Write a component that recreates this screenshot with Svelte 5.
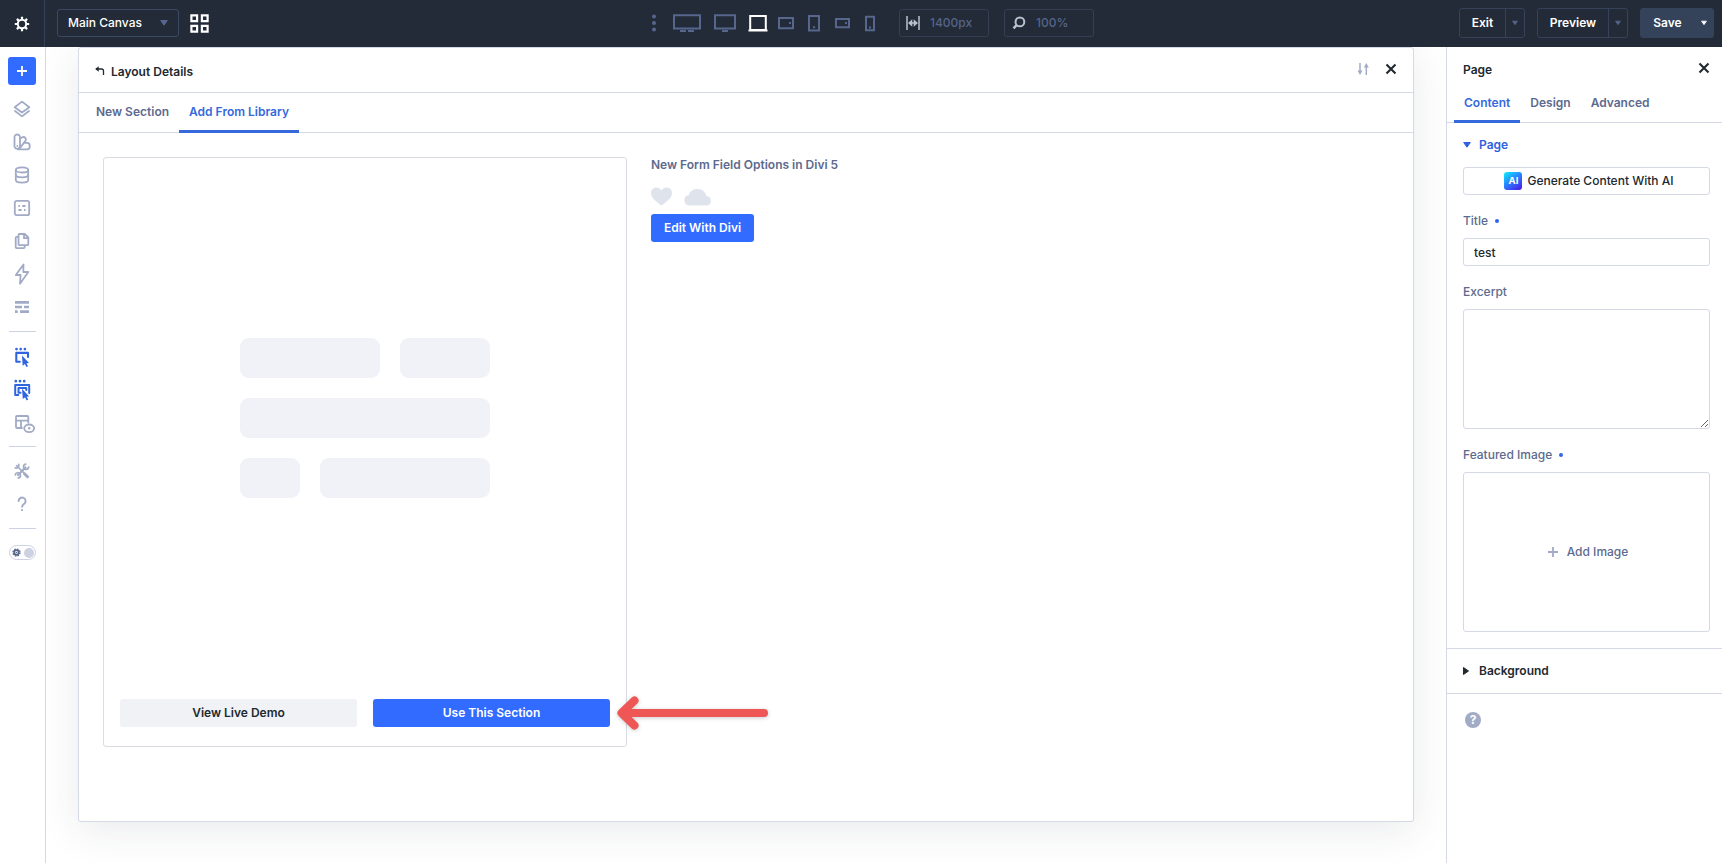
<script lang="ts">
  // Sidebar tools, grouped by the dividers between them
  const toolGroups = [
    ['layers', 'presets', 'database', 'variables', 'pages', 'bolt', 'wireframe'],
    ['select', 'multiselect', 'layoutview'],
    ['tools', 'support']
  ];

  const devices = ['wide', 'desktop', 'laptop', 'tabletwide', 'tablet', 'phonewide', 'phone'];
  let activeDevice = $state('laptop');

  const libraryTabs = ['New Section', 'Add From Library'];
  let activeLibraryTab = $state('Add From Library');

  const pageTabs = ['Content', 'Design', 'Advanced'];
  let activePageTab = $state('Content');

  let title = $state('test');
  let excerpt = $state('');
</script>

{#snippet caret()}
  <svg class="caret" width="8" height="6" viewBox="0 0 8 6"><path d="M.7.5h6.6L4 5.2z" fill="currentColor" stroke="currentColor" stroke-linejoin="round" /></svg>
{/snippet}

{#snippet close()}
  <svg width="12" height="12" viewBox="0 0 12 12"><path d="M1.500 1.500l9 9M10.500 1.500l-9 9" stroke="currentColor" stroke-width="2.100" /></svg>
{/snippet}

{#snippet toolIcon(name: string)}
  <svg width="24" height="24" viewBox="0 0 24 24" fill="none" stroke="currentColor" stroke-width="1.8" stroke-linejoin="round" stroke-linecap="round">
    {#if name === 'layers'}
      <path d="M12 4.600L19.300 10.200L12 15.500L4.700 10.200z" />
      <path d="M5 14L12 19.400L19 14" />
    {:else if name === 'presets'}
      <path d="M7.400 4.500a2.600 2.600 0 0 1 2.600 2.600V16.800a2.900 2.900 0 0 1-5.500 0V7.100a2.600 2.600 0 0 1 2.900-2.600z" />
      <path d="M10.300 8.400l2.100-1.100a2.400 2.400 0 0 1 3.200 3.300L9.500 18.600" />
      <path d="M15 12.800h2.200a2.700 2.700 0 0 1 2.500 2.700v1.300a2.500 2.500 0 0 1-2.500 2.500H7.800" />
      <path d="M7.300 16v.1" />
    {:else if name === 'database'}
      <ellipse cx="12" cy="6.900" rx="6.200" ry="2.600" />
      <path d="M5.800 7v10c0 1.500 2.800 2.600 6.200 2.600s6.200-1.100 6.200-2.600V7" />
      <path d="M5.800 12c0 1.500 2.800 2.300 6.200 2.300s6.200-.8 6.200-2.300" />
    {:else if name === 'variables'}
      <rect x="4.800" y="4.800" width="14.400" height="14.400" rx="2" />
      <path d="M8.400 10h1.500M12.300 10h3.200M8.400 14h3.200M14 14h1.500" stroke-linecap="butt" />
    {:else if name === 'pages'}
      <path d="M9.500 5h5.300l3.500 3.500v6.700a1 1 0 0 1-1 1H9.500a1 1 0 0 1-1-1V6a1 1 0 0 1 1-1zM14 5.200v4h4" />
      <path d="M8.300 7.800H6.700a1 1 0 0 0-1 1v9.300a1 1 0 0 0 1 1h7a1 1 0 0 0 1-1v-1.500" />
    {:else if name === 'bolt'}
      <path d="M13.500 2.500L5.800 13h4.800l-.6 8.700L18.300 10h-5z" />
    {:else if name === 'wireframe'}
      <path d="M5 7.400h14M5 12h7M14 12h5M5 16.600h2.700M10 16.600h9" stroke-width="2.700" stroke-linecap="butt" />
    {:else if name === 'select'}
      <path d="M6.500 5v.1M10.700 5v.1M14.900 5v.1" stroke-width="2.700" />
      <path d="M18 13V8.900H6.300V17.700H9.800" stroke-width="2.100" />
      <path d="M12 11.500l7 7.600-2.500.2 1.500 3-1.600.8-1.500-3.100-2.200 1.700z" fill="currentColor" stroke="none" />
    {:else if name === 'multiselect'}
      <path d="M5.800 4.100v.1M10 4.100v.1M14.200 4.100v.1" stroke-width="2.700" />
      <path d="M19.200 16V8H5.200V18H8.300M16.300 13v-2H8.500v4.700h2" stroke-width="2" />
      <path d="M12 11.800l7.200 7.600-2.500.2 1.500 3-1.600.8-1.500-3.100-2.300 1.700z" fill="currentColor" stroke="none" />
    {:else if name === 'layoutview'}
      <path d="M18.300 11.500V6a1 1 0 0 0-1-1H7a1 1 0 0 0-1 1v10a1 1 0 0 0 1 1h5M6 9.600h12M11 9.600v7" />
      <ellipse cx="19.200" cy="17.300" rx="5" ry="3.800" /><circle cx="19.200" cy="17.300" r="1.200" fill="currentColor" stroke="none" />
    {:else if name === 'tools'}
      <path d="M6.500 6.500L15 15" stroke-width="1.600" /><path d="M14.500 14.800L17.500 17.800" stroke-width="3" />
      <path d="M15.500 8.500L8 16" stroke-width="2.200" />
      <path d="M8.700 5.300a2.700 2.700 0 0 1-3.500 3.500M18.700 8.200a2.600 2.600 0 1 1-3-3M5.300 15.900a2.600 2.600 0 1 1 3 3" stroke-width="1.700" />
    {:else}
      <path d="M8.600 9.100a3.500 3.500 0 1 1 5.700 2.700c-1.500 1.100-2.200 1.600-2.200 3" stroke-width="1.900" /><path d="M12 18v.1" stroke-width="2.200" />
    {/if}
  </svg>
{/snippet}

{#snippet deviceIcon(name: string)}
  {#if name === 'wide'}
    <svg width="28" height="20" viewBox="0 0 28 20"><path d="M1 2.300h26v13.200H1zM7 18h6M15 18h6" /></svg>
  {:else if name === 'desktop'}
    <svg width="22" height="20" viewBox="0 0 22 20"><path d="M1 2.300h20v13.200H1zM8 18h6" /></svg>
  {:else if name === 'laptop'}
    <svg width="20" height="20" viewBox="0 0 20 20"><path d="M2.200 3h15.600v14H2.200zM.5 17.500h19" /></svg>
  {:else if name === 'tabletwide'}
    <svg width="16" height="20" viewBox="0 0 16 20"><path d="M1 5h14v10.200H1zM11 10h2" /></svg>
  {:else if name === 'tablet'}
    <svg width="12" height="20" viewBox="0 0 12 20"><path d="M1 3h10v14.500H1zM5 14.300h2" /></svg>
  {:else if name === 'phonewide'}
    <svg width="15" height="20" viewBox="0 0 15 20"><path d="M1 6h13v8.200H1zM10 10h2" /></svg>
  {:else}
    <svg width="10" height="20" viewBox="0 0 10 20"><path d="M1 3.800h8v13.500H1zM4 14.500h2" /></svg>
  {/if}
{/snippet}

<div class="builder">
  <header class="topbar">
    <button class="settings" aria-label="Settings">
      <svg width="16" height="16" viewBox="0 0 16 16" fill="none" stroke="currentColor">
        <circle cx="8" cy="8" r="4.200" stroke-width="2" />
        <path d="M8 .8v2.500M8 12.700v2.500M.8 8h2.500M12.700 8h2.500M2.900 2.900l1.800 1.800M11.300 11.300l1.800 1.800M13.100 2.900l-1.800 1.800M4.700 11.300l-1.800 1.800" stroke-width="2.200" />
      </svg>
    </button>
    <button class="canvas-select">
      <span>Main Canvas</span>
      {@render caret()}
    </button>
    <button class="grid-button" aria-label="Canvases">
      <svg width="19" height="19" viewBox="0 0 19 19" fill="none" stroke="currentColor" stroke-width="2.200"><path d="M1.400 1.400h5.700v5.700H1.400zM11.900 1.400h5.700v5.700h-5.700zM1.400 11.900h5.700v5.700H1.400zM11.900 11.900h5.700v5.700h-5.700z" /></svg>
    </button>

    <div class="devices">
      <svg class="dots" width="4" height="18" viewBox="0 0 4 18"><circle cx="2" cy="2.500" r="2" /><circle cx="2" cy="9" r="2" /><circle cx="2" cy="15.500" r="2" /></svg>
      {#each devices as device}
        <button class="device {device} {device === activeDevice ? 'active' : ''}" aria-label={device} onclick={() => activeDevice = device}>
          {@render deviceIcon(device)}
        </button>
      {/each}
    </div>

    <div class="measure">
      <svg width="14" height="14" viewBox="0 0 14 14" fill="none" stroke="currentColor" stroke-width="1.500"><path d="M1 0v14M13 0v14M3 7h8" stroke-width="1.500" /><path d="M6.300 3.200v7.600L2 7zM7.700 3.200v7.600L12 7z" fill="currentColor" stroke="none" /></svg>
      <span>1400px</span>
    </div>
    <div class="measure zoom">
      <svg width="14" height="14" viewBox="0 0 14 14" fill="none" stroke="currentColor" stroke-width="2"><circle cx="7.900" cy="5.900" r="4.400" /><path d="M4.600 9.200L1.500 12.300" stroke-width="2.600" /></svg>
      <span>100%</span>
    </div>

    <div class="actions">
      <div class="split exit"><button>Exit</button><button class="more" aria-label="Exit options">{@render caret()}</button></div>
      <div class="split preview"><button>Preview</button><button class="more" aria-label="Preview options">{@render caret()}</button></div>
      <div class="split save"><button>Save</button><button class="more" aria-label="Save options">{@render caret()}</button></div>
    </div>
  </header>

  <div class="workspace">
    <nav class="sidebar">
      <button class="add" aria-label="Add">
        <svg width="10" height="10" viewBox="0 0 10 10"><path d="M5 0v10M0 5h10" stroke="currentColor" stroke-width="1.800" /></svg>
      </button>
      {#each toolGroups as group}
        <div class="tool-group">
          {#each group as tool}
            <button class="tool {tool}" aria-label={tool}>{@render toolIcon(tool)}</button>
          {/each}
        </div>
        <hr />
      {/each}
      <button class="theme-toggle" aria-label="Theme">
        <svg width="9" height="9" viewBox="0 0 9 9" fill="none"><circle cx="4.500" cy="4.500" r="2.300" stroke="#58658a" stroke-width="1.800" /><circle cx="4.500" cy="4.500" r="3.500" stroke="#58658a" stroke-width="1.300" stroke-dasharray="1.600 1.150" /><circle cx="4.500" cy="4.500" r=".8" fill="#58658a" /></svg>
        <span class="knob"></span>
      </button>
    </nav>

    <main class="stage">
      <section class="modal">
        <div class="modal-header">
          <svg width="10" height="9" viewBox="0 0 10 9" fill="none" stroke="currentColor" stroke-width="1.300"><path d="M1 3h5.500a2 2 0 0 1 2 2v4" /><path d="M3.700.2L.2 3l3.500 2.700z" fill="currentColor" stroke="none" /></svg>
          <h2>Layout Details</h2>
          <svg class="sort" width="12" height="12" viewBox="0 0 12 12" fill="none" stroke="currentColor" stroke-width="1.500"><path d="M3 0v10M9.300 2v10" /><path d="M.5 7.500h5L3 12zM6.800 4.500h5L9.300 0z" fill="currentColor" stroke="none" /></svg>
          <button class="close" aria-label="Close">{@render close()}</button>
        </div>
        <div class="modal-tabs">
          {#each libraryTabs as tab}
            <button class={tab === activeLibraryTab ? 'active' : ''} onclick={() => activeLibraryTab = tab}>{tab}</button>
          {/each}
        </div>
        <div class="modal-body">
          <div class="preview-card">
            <div class="skeleton">
              <div class="row"><span class="bone w140"></span><span class="bone"></span></div>
              <div class="row"><span class="bone"></span></div>
              <div class="row"><span class="bone w60"></span><span class="bone"></span></div>
            </div>
            <div class="card-buttons">
              <button class="demo">View Live Demo</button>
              <button class="use">Use This Section</button>
            </div>
            <svg class="pointer" width="160" height="48" viewBox="0 0 160 48"><path d="M148 24H9M18.500 11.500L5.500 24l13 12.500" fill="none" stroke="#ef5656" stroke-width="8" stroke-linecap="round" stroke-linejoin="round" /></svg>
          </div>
          <div class="details">
            <h3>New Form Field Options in Divi 5</h3>
            <div class="badges">
              <svg width="21" height="19" viewBox="0 0 21 19"><path d="M10.500 18.600C7 15.800 0 11.500 0 6 0 2.800 2.300.5 5.300.5c2.200 0 4 1.200 5.200 3 1.200-1.800 3-3 5.200-3C18.700.5 21 2.800 21 6c0 5.500-7 9.800-10.500 12.600z" fill="currentColor" /></svg>
              <svg width="28" height="19" viewBox="0 0 28 19"><path d="M5.400 18.500a5.300 5.300 0 0 1-.7-10.500A9.400 9.400 0 0 1 22.500 8.900 4.900 4.900 0 0 1 23.200 18.500z" fill="currentColor" /></svg>
            </div>
            <button class="edit">Edit With Divi</button>
          </div>
        </div>
      </section>
    </main>

    <aside class="panel">
      <div class="panel-header">
        <h2>Page</h2>
        <button class="close" aria-label="Close">{@render close()}</button>
      </div>
      <div class="panel-tabs">
        {#each pageTabs as tab}
          <button class={tab === activePageTab ? 'active' : ''} onclick={() => activePageTab = tab}>{tab}</button>
        {/each}
      </div>
      <div class="group">
        <button class="group-title">{@render caret()}<span>Page</span></button>
        <button class="ai"><span class="ai-logo">AI</span>Generate Content With AI</button>
        <label class="field-label" for="title">Title <i class="dot"></i></label>
        <input id="title" bind:value={title} />
        <label class="field-label" for="excerpt">Excerpt</label>
        <textarea id="excerpt" bind:value={excerpt}></textarea>
        <div class="field-label">Featured Image <i class="dot"></i></div>
        <button class="upload">
          <svg width="10" height="10" viewBox="0 0 10 10"><path d="M5 0v10M0 5h10" stroke="#a2abc6" stroke-width="1.800" /></svg>
          Add Image
        </button>
      </div>
      <div class="group-closed">
        <svg width="6" height="8" viewBox="0 0 6 8"><path d="M.5.5v7L5.500 4z" fill="currentColor" stroke="currentColor" stroke-linejoin="round" /></svg>
        <span>Background</span>
      </div>
      <button class="panel-help">?</button>
    </aside>
  </div>
</div>

<style>
  :global(body) {
    margin: 0;
    background: #fff;
  }

  .builder {
    display: flex;
    flex-direction: column;
    width: 100%;
    height: 100vh;
    overflow: hidden;
    font-family: Inter, "Liberation Sans", sans-serif;
    font-size: 12px;
    font-weight: 500;
    line-height: 16px;
    color: #20292f;
  }

  .builder * {
    box-sizing: border-box;
  }

  button {
    display: flex;
    align-items: center;
    justify-content: center;
    margin: 0;
    padding: 0;
    border: 0;
    background: none;
    font: inherit;
    color: inherit;
    white-space: nowrap;
    cursor: pointer;
  }

  h2,
  h3 {
    margin: 0;
    font-size: 12px;
    font-weight: 600;
    line-height: 16px;
  }

  svg {
    display: block;
    flex: none;
    overflow: visible;
  }

  .topbar {
    display: flex;
    align-items: center;
    flex: none;
    height: 47px;
    padding: 0 8px 1px 0;
    background: #222b37;
    color: #fff;
    position: relative;
    z-index: 3;
  }

  .settings {
    width: 45px;
    height: 47px;
    margin-bottom: -1px;
    border-right: 1px solid #354158;
  }

  .canvas-select {
    justify-content: space-between;
    width: 122px;
    height: 28px;
    margin-left: 12px;
    padding: 0 10px;
    border: 1px solid #3c4964;
    border-radius: 3px;
  }

  .caret {
    color: #57668d;
  }

  .grid-button {
    margin-left: 11px;
  }

  .devices {
    display: flex;
    align-items: center;
    margin-left: 443px;
    fill: none;
    stroke: #57668d;
    stroke-width: 2;
  }

  .dots {
    fill: #57668d;
    stroke: none;
  }

  .device.active {
    stroke: #fff;
  }

  .device.wide {
    margin-left: 17px;
  }

  .device.desktop {
    margin-left: 13px;
  }

  .device.laptop {
    margin-left: 12px;
  }

  .device.tabletwide {
    margin-left: 10px;
  }

  .device.tablet {
    margin-left: 14px;
  }

  .device.phonewide,
  .device.phone {
    margin-left: 15px;
  }

  .measure {
    display: flex;
    align-items: center;
    gap: 10px;
    width: 90px;
    height: 28px;
    margin-left: 24px;
    padding-left: 6px;
    border: 1px solid #343f54;
    border-radius: 3px;
    color: #b9c1d3;
  }

  .measure span {
    color: #56648a;
  }

  .measure.zoom {
    margin-left: 15px;
    padding-left: 7px;
  }

  .actions {
    display: flex;
    gap: 12px;
    margin-left: auto;
    font-weight: 600;
  }

  .split {
    display: flex;
    height: 30px;
    border: 1px solid #36425a;
    border-radius: 3px;
  }

  .split button {
    flex: 1;
  }

  .split .more {
    flex: none;
    width: 19px;
    border-left: 1px solid #36425a;
  }

  .split .caret {
    width: 6px;
  }

  .exit {
    width: 66px;
  }

  .preview {
    width: 91px;
  }

  .save {
    width: 74px;
    background: #34435a;
  }

  .save .more {
    border: 0;
  }

  .save .caret {
    color: #fff;
  }

  .workspace {
    display: flex;
    flex: 1;
    min-height: 0;
  }

  .sidebar {
    display: flex;
    flex-direction: column;
    align-items: center;
    flex: none;
    width: 46px;
    padding: 10px 1px 0 0;
    border-right: 1px solid #d5d8e5;
    background: #fff;
    color: #a2abc6;
    position: relative;
    z-index: 2;
  }

  .add {
    width: 28px;
    height: 28px;
    margin-bottom: 7px;
    border-radius: 3px;
    background: #316bff;
    color: #fff;
  }

  .tool {
    width: 28px;
    height: 33px;
  }

  .select,
  .multiselect {
    color: #2f66df;
  }

  .layoutview {
    padding-top: 2px;
  }

  .sidebar hr {
    width: 27px;
    height: 1px;
    margin: 8px 0 7px;
    border: 0;
    background: #cdd2e2;
  }

  .theme-toggle {
    justify-content: space-between;
    width: 27px;
    height: 15px;
    margin-top: 9px;
    padding: 0 1px 0 2px;
    border: 1px solid #cdd2e2;
    border-radius: 8px;
  }

  .knob {
    width: 10px;
    height: 10px;
    border-radius: 50%;
    background: #cdd2e2;
  }

  .stage {
    flex: 1;
    min-width: 0;
    padding: 0 32px;
  }

  .modal {
    display: flex;
    flex-direction: column;
    height: 775px;
    border: 1px solid #d5d8e5;
    border-radius: 3px;
    background: #fff;
    box-shadow: 0 8px 40px rgba(43, 50, 70, 0.1);
  }

  .modal-header {
    display: flex;
    align-items: center;
    height: 45px;
    padding: 0 16px;
    border-bottom: 1px solid #d5d8e5;
  }

  .modal-header h2 {
    margin-left: 6px;
    padding-top: 3px;
  }

  .sort {
    margin: 0 16px 3px auto;
    color: #a2abc6;
  }

  .modal-header .close {
    margin-bottom: 3px;
  }

  .modal-tabs,
  .panel-tabs {
    display: flex;
    border-bottom: 1px solid #d5d8e5;
    color: #5c6a8e;
    font-weight: 600;
  }

  .modal-tabs {
    height: 40px;
    padding-left: 7px;
  }

  .modal-tabs button,
  .panel-tabs button {
    margin-bottom: -1px;
    padding: 0 10px;
    border-bottom: 3px solid transparent;
  }

  .modal-tabs button {
    padding-top: 1px;
  }

  .modal-tabs .active,
  .panel-tabs .active {
    border-color: #3569dc;
    color: #3569dc;
  }

  .modal-body {
    display: flex;
    align-items: flex-start;
    gap: 24px;
    padding: 24px;
  }

  .preview-card {
    display: flex;
    flex-direction: column;
    width: 524px;
    height: 590px;
    padding: 0 16px 19px;
    border: 1px solid #d9dce5;
    border-radius: 3px;
    position: relative;
  }

  .skeleton {
    display: flex;
    flex-direction: column;
    justify-content: center;
    gap: 20px;
    flex: 1;
    width: 250px;
    margin: 0 auto;
    padding-bottom: 22px;
  }

  .row {
    display: flex;
    gap: 20px;
    height: 40px;
  }

  .bone {
    flex: 1;
    border-radius: 9px;
    background: #f1f2f7;
  }

  .w140 {
    flex: 0 0 140px;
  }

  .w60 {
    flex: 0 0 60px;
  }

  .card-buttons {
    display: flex;
    gap: 16px;
    font-weight: 600;
  }

  .card-buttons button {
    flex: 1;
    height: 28px;
    border-radius: 3px;
  }

  .demo {
    background: #f1f2f6;
  }

  .use,
  .edit {
    background: #316bff;
    color: #fff;
  }

  .pointer {
    position: absolute;
    left: 512px;
    bottom: 9px;
    filter: drop-shadow(0 1px 2px rgba(0, 0, 0, 0.2));
  }

  .details h3 {
    color: #5c6a8e;
    line-height: 15px;
  }

  .badges {
    display: flex;
    gap: 12px;
    padding: 15px 0 8px;
    color: #dfe3eb;
  }

  .edit {
    width: 103px;
    height: 28px;
    border-radius: 3px;
    font-weight: 600;
  }

  .panel {
    flex: none;
    width: 276px;
    border-left: 1px solid #d5d8e5;
    background: #fff;
    position: relative;
    z-index: 2;
  }

  .panel-header {
    display: flex;
    align-items: center;
    justify-content: space-between;
    height: 40px;
    padding: 6px 12px 0 16px;
  }

  .panel-header .close {
    margin-bottom: 5px;
  }

  .panel-tabs {
    height: 36px;
    padding: 0 0 0 7px;
  }

  .panel-tabs button {
    padding-bottom: 2px;
  }

  .group {
    padding: 14px 12px 16px 16px;
    border-bottom: 1px solid #d5d8e5;
  }

  .group-title {
    gap: 8px;
    height: 16px;
    margin-bottom: 14px;
    color: #2f62dc;
    font-weight: 600;
  }

  .group-title .caret {
    color: #2f62dc;
  }

  .ai {
    gap: 5px;
    width: 100%;
    height: 28px;
    padding-left: 5px;
    border: 1px solid #d5d8e5;
    border-radius: 3px;
  }

  .ai-logo {
    width: 18px;
    height: 18px;
    border-radius: 3px;
    background: linear-gradient(145deg, #10e4fb 5%, #2d75ff 52%, #4b16e3);
    color: #fff;
    font-size: 9.5px;
    font-weight: 700;
    line-height: 18px;
    text-align: center;
  }

  .field-label {
    display: flex;
    align-items: center;
    gap: 7px;
    height: 16px;
    margin: 18px 0 9px;
    color: #5c6a8e;
  }

  .dot {
    width: 4px;
    height: 4px;
    border-radius: 50%;
    background: #2f66ef;
  }

  input,
  textarea,
  .upload {
    display: flex;
    width: 100%;
    border: 1px solid #d5d8e5;
    border-radius: 3px;
    background: #fff;
    font: inherit;
    color: inherit;
    outline: none;
  }

  input {
    height: 28px;
    padding: 0 10px;
  }

  textarea {
    height: 120px;
    padding: 8px 10px;
    resize: vertical;
  }

  .upload {
    gap: 9px;
    height: 160px;
    padding-left: 3px;
    color: #5c6a8e;
  }

  .group-closed {
    display: flex;
    align-items: center;
    gap: 10px;
    height: 45px;
    padding-left: 16px;
    border-bottom: 1px solid #d5d8e5;
    font-weight: 600;
  }

  .panel-help {
    width: 16px;
    height: 16px;
    margin: 18px;
    border-radius: 50%;
    background: #a2abc6;
    color: #fff;
    font-weight: 700;
  }
</style>
